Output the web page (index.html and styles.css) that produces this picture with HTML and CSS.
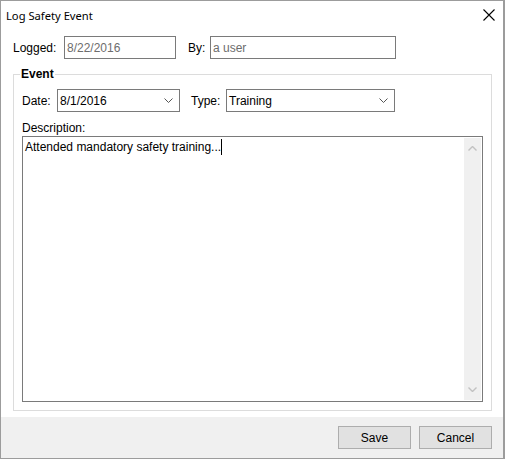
FILE: index.html
```html
<!DOCTYPE html>
<html lang="en">
<head>
  <meta charset="UTF-8">
  <title>Log Safety Event</title>
  <link rel="stylesheet" href="styles.css">
</head>
<body>
  <div class="window">
    <div class="titlebar">
      <span class="title">Log Safety Event</span>
      <span class="close">
        <svg width="12" height="12" viewBox="0 0 12 12"><path d="M0.5 0.5 L11.5 11.5 M11.5 0.5 L0.5 11.5" stroke="#000" stroke-width="1.1" fill="none"/></svg>
      </span>
    </div>

    <div class="content">
      <div class="logged-row">
        <label class="lbl lbl-logged">Logged:</label>
        <div class="box box-logged disabled">8/22/2016</div>
        <label class="lbl lbl-by">By:</label>
        <div class="box box-by disabled">a user</div>
      </div>

      <fieldset class="group">
        <legend>Event</legend>
        <div class="event-row">
          <label class="lbl lbl-date">Date:</label>
          <div class="box combo combo-date">
            <span>8/1/2016</span>
            <svg class="chev" width="9" height="5" viewBox="0 0 9 5"><path d="M0.5 0.5 L4.5 4.5 L8.5 0.5" stroke="#555" fill="none"/></svg>
          </div>
          <label class="lbl lbl-type">Type:</label>
          <div class="box combo combo-type">
            <span>Training</span>
            <svg class="chev" width="9" height="5" viewBox="0 0 9 5"><path d="M0.5 0.5 L4.5 4.5 L8.5 0.5" stroke="#555" fill="none"/></svg>
          </div>
        </div>
        <div class="desc-label">Description:</div>
        <div class="memo">
          <div class="memo-text">Attended mandatory safety training...<span class="caret"></span></div>
          <div class="scrollbar">
            <svg width="9" height="5" viewBox="0 0 9 5"><path d="M0.5 4.5 L4.5 0.5 L8.5 4.5" stroke="#c2c2c2" stroke-width="1.4" fill="none"/></svg>
            <svg width="9" height="5" viewBox="0 0 9 5"><path d="M0.5 0.5 L4.5 4.5 L8.5 0.5" stroke="#c2c2c2" stroke-width="1.4" fill="none"/></svg>
          </div>
        </div>
      </fieldset>
    </div>

    <div class="footer">
      <button class="btn">Save</button>
      <button class="btn">Cancel</button>
    </div>
  </div>
</body>
</html>
```

FILE: styles.css
```css
* {
  margin: 0;
  padding: 0;
  box-sizing: border-box;
}

body {
  font-family: 'Liberation Sans', Arial, sans-serif;
  font-size: 12px;
  color: #000;
  background-color: #fff;
}

.window {
  width: 505px;
  height: 459px;
  border: 1px solid #9c9c9c;
  border-right-width: 2px;
  background-color: #fff;
  display: flex;
  flex-direction: column;
}

.titlebar {
  height: 30px;
  display: flex;
  align-items: center;
  justify-content: space-between;
  padding: 0 8px 2px 5px;
}

.title {
  font-family: 'Noto Sans', 'Open Sans', sans-serif;
  font-size: 11.2px;
}

.close {
  display: flex;
  width: 12px;
  height: 12px;
}

.content {
  flex: 1;
  padding-top: 5px;
}

.lbl {
  display: block;
  flex: none;
}

.box {
  flex: none;
  height: 23px;
  border: 1px solid #7a7a7a;
  background-color: #fff;
  padding: 0 2px;
  display: flex;
  align-items: center;
}

.disabled {
  color: #6d6d6d;
}

.logged-row {
  display: flex;
  align-items: center;
  padding-left: 12px;
}

.lbl-logged {
  width: 51px;
}

.box-logged {
  width: 112px;
}

.lbl-by {
  margin-left: 12px;
  width: 22px;
}

.box-by {
  width: 186px;
}

.group {
  margin: 9px 0 0 12px;
  width: 479px;
  height: 343px;
  border: 1px solid #dcdcdc;
  padding: 7px 8px 0 8px;
}

.group legend {
  font-weight: bold;
  padding: 0 1px;
  margin-left: -2px;
  line-height: 13px;
}

.event-row {
  display: flex;
  align-items: center;
  margin-top: 1px;
}

.lbl-date {
  width: 35px;
}

.combo {
  justify-content: space-between;
  padding-right: 6px;
}

.combo-date {
  width: 123px;
}

.lbl-type {
  margin-left: 11px;
  width: 35px;
}

.combo-type {
  width: 169px;
}

.desc-label {
  margin-top: 9px;
  line-height: 14px;
}

.memo {
  margin-top: 1px;
  width: 461px;
  height: 266px;
  border: 1px solid #7a7a7a;
  display: flex;
}

.memo-text {
  flex: 1;
  padding: 2px 2px;
  line-height: 16px;
}

.caret {
  display: inline-block;
  width: 1px;
  height: 16px;
  background-color: #000;
  vertical-align: top;
}

.scrollbar {
  width: 17px;
  margin: 1px 1px 1px 0;
  background-color: #f0f0f0;
  display: flex;
  flex-direction: column;
  align-items: center;
  justify-content: space-between;
  padding: 8px 0 8px 0;
}

.footer {
  height: 41px;
  background-color: #f0f0f0;
  display: flex;
  justify-content: flex-end;
  align-items: center;
  gap: 8px;
  padding-right: 11px;
}

.btn {
  width: 73px;
  height: 23px;
  border: 1px solid #adadad;
  background-color: #e1e1e1;
  font-family: 'Liberation Sans', Arial, sans-serif;
  font-size: 12px;
  color: #000;
}
```
